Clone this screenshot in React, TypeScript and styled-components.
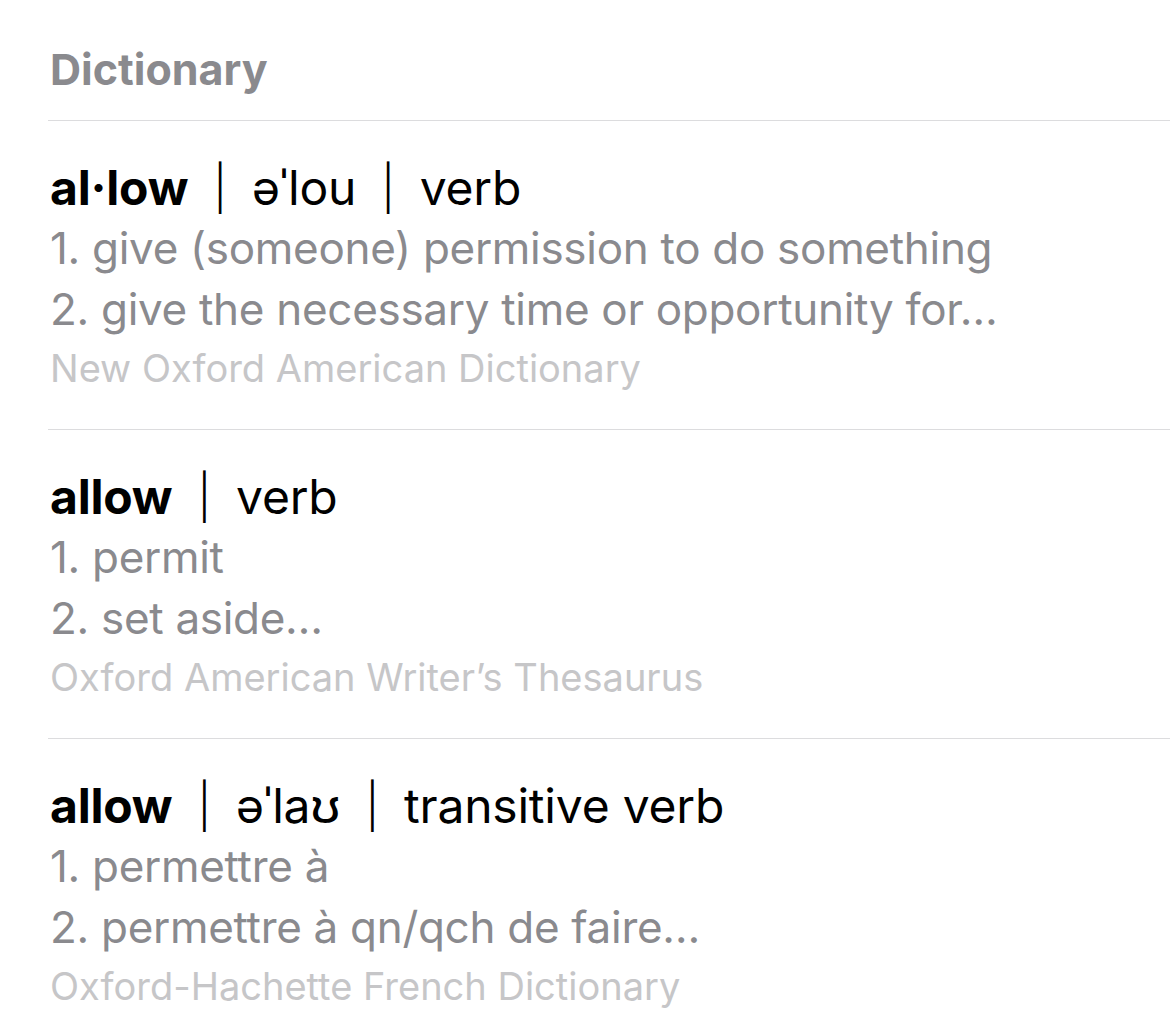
import React from "react";
import styled, { createGlobalStyle } from "styled-components";

const GlobalStyle = createGlobalStyle`
  html, body {
    margin: 0;
    padding: 0;
    background: #ffffff;
  }
  body {
    font-family: Inter, "Noto Sans", "Liberation Sans", sans-serif;
    -webkit-font-smoothing: antialiased;
  }
`;

const Page = styled.div`
  width: 1170px;
  height: 1023px;
  overflow: hidden;
  background: #ffffff;
  padding-left: 48px;
  box-sizing: border-box;
`;

const SectionTitle = styled.h2`
  margin: 0;
  height: 120px;
  display: flex;
  align-items: center;
  padding: 18px 0 0 2px;
  font-size: 43px;
  font-weight: 700;
  letter-spacing: 0;
  color: #8a8a8e;
  box-sizing: border-box;
`;

const Entry = styled.div`
  border-top: 1px solid #dcdcde;
  padding: 37px 0 33px 2px;
  display: flex;
  flex-direction: column;
`;

const Heading = styled.div`
  font-size: 48px;
  line-height: 60px;
  color: #000000;
  white-space: nowrap;
  letter-spacing: -0.2px;
`;

const Word = styled.span`
  font-weight: 700;
`;

const Bar = styled.span`
  display: inline-block;
  margin: 0 25px;
  font-size: 44px;
  font-weight: 300;
  vertical-align: 1px;
`;

const Sense = styled.div`
  font-size: 44px;
  line-height: 61px;
  color: #8a8a8e;
  white-space: nowrap;
  letter-spacing: -0.3px;
`;

const Source = styled.div`
  font-size: 38px;
  line-height: 56px;
  color: #c6c6c8;
  white-space: nowrap;
  letter-spacing: 0;
`;

type DictEntry = {
  word: string;
  parts: string[];
  senses: string[];
  source: string;
};

const entries: DictEntry[] = [
  {
    word: "al·low",
    parts: ["əˈlou", "verb"],
    senses: [
      "1. give (someone) permission to do something",
      "2. give the necessary time or opportunity for…",
    ],
    source: "New Oxford American Dictionary",
  },
  {
    word: "allow",
    parts: ["verb"],
    senses: ["1. permit", "2. set aside…"],
    source: "Oxford American Writer’s Thesaurus",
  },
  {
    word: "allow",
    parts: ["əˈlaʊ", "transitive verb"],
    senses: ["1. permettre à", "2. permettre à qn/qch de faire…"],
    source: "Oxford-Hachette French Dictionary",
  },
];

export default function App() {
  return (
    <Page>
      <GlobalStyle />
      <SectionTitle>Dictionary</SectionTitle>
      {entries.map((e, i) => (
        <Entry key={i}>
          <Heading>
            <Word>{e.word}</Word>
            {e.parts.map((p, j) => (
              <React.Fragment key={j}>
                <Bar>|</Bar>
                {p}
              </React.Fragment>
            ))}
          </Heading>
          {e.senses.map((s, j) => (
            <Sense key={j}>{s}</Sense>
          ))}
          <Source>{e.source}</Source>
        </Entry>
      ))}
    </Page>
  );
}
